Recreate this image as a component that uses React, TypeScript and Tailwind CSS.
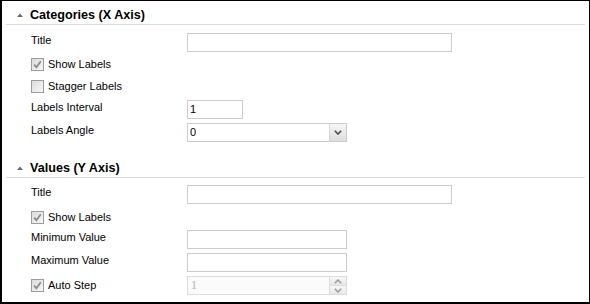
import React from "react";

const Check = ({ checked }: { checked: boolean }) => (
  <span className="w-[13px] h-[13px] border border-[#9c9c9c] bg-linear-to-br from-[#dcdcdc] to-[#f7f7f7] flex items-center justify-center shrink-0">
    {checked && (
      <svg width="9" height="9" viewBox="0 0 9 9">
        <path d="M1.2 4.6 L3.4 7.2 L7.8 1.2" stroke="#8c8c8c" strokeWidth="1.8" fill="none" />
      </svg>
    )}
  </span>
);

const Header = ({ title, className = "" }: { title: string; className?: string }) => (
  <div className={`h-[24px] mx-[4px] border-b border-[#dcdcdc] flex items-start pt-[6px] ${className}`}>
    <svg width="6" height="4" viewBox="0 0 6 4" className="ml-[11px] mt-[6px] shrink-0">
      <polygon points="0,4 3,0.5 6,4" fill="#6a6a6a" />
    </svg>
    <span className="ml-[7px] text-[12.6px] leading-[16px] font-bold text-black">{title}</span>
  </div>
);

const InputRow = ({
  label,
  h = "h-[23px]",
  children,
}: {
  label: string;
  h?: string;
  children: React.ReactNode;
}) => (
  <div className={`flex items-center pl-[29px] ${h}`}>
    <span className="w-[156px] pb-[4px] shrink-0">{label}</span>
    {children}
  </div>
);

const CheckRow = ({ label, checked, h = "h-[23px]" }: { label: string; checked: boolean; h?: string }) => (
  <div className={`flex items-center pl-[29px] ${h}`}>
    <Check checked={checked} />
    <span className="ml-[4px]">{label}</span>
  </div>
);

const TextBox = ({ w, value }: { w: string; value?: string }) => (
  <div className={`${w} h-[19px] border border-[#cccccc] bg-white flex items-center pl-[2px] text-[11px]`}>
    {value}
  </div>
);

export default function App() {
  return (
    <div
      className="w-[590px] h-[304px] bg-white border-black border-t border-r border-l-2 border-b-2 text-[11px] leading-[13px] text-black overflow-hidden"
      style={{ fontFamily: '"Liberation Sans", Arial, sans-serif' }}
    >
      <Header title="Categories (X Axis)" />
      <div className="pt-[6px]">
        <InputRow label="Title">
          <TextBox w="w-[265px]" />
        </InputRow>
        <CheckRow label="Show Labels" checked h="h-[21px]" />
        <CheckRow label="Stagger Labels" checked={false} />
        <InputRow label="Labels Interval">
          <TextBox w="w-[56px]" value="1" />
        </InputRow>
        <InputRow label="Labels Angle">
          <div className="w-[160px] h-[19px] border border-[#cccccc] bg-white flex items-stretch">
            <div className="flex-1 flex items-center pl-[2px]">0</div>
            <div className="w-[17px] border-l border-[#d4d4d4] bg-linear-to-b from-[#f6f6f6] to-[#dedede] flex items-center justify-center">
              <svg width="8" height="5" viewBox="0 0 8 5">
                <path d="M0.8 0.8 L4 4 L7.2 0.8" stroke="#4a4a4a" strokeWidth="1.6" fill="none" />
              </svg>
            </div>
          </div>
        </InputRow>
      </div>

      <Header title="Values (Y Axis)" className="mt-[10px]" />
      <div className="pt-[5px]">
        <InputRow label="Title">
          <TextBox w="w-[265px]" />
        </InputRow>
        <CheckRow label="Show Labels" checked h="h-[22px]" />
        <InputRow label="Minimum Value">
          <TextBox w="w-[160px]" />
        </InputRow>
        <InputRow label="Maximum Value">
          <TextBox w="w-[160px]" />
        </InputRow>
        <div className="flex items-center pl-[29px] h-[23px]">
          <div className="w-[156px] flex items-center">
            <Check checked />
            <span className="ml-[4px]">Auto Step</span>
          </div>
          <div className="w-[160px] h-[19px] border border-[#dcdcdc] bg-[#fbfbfb] flex items-stretch">
            <div
              className="flex-1 flex items-center pl-[3px] text-[12px] text-[#b4b4b4]"
              style={{ fontFamily: '"Liberation Serif", serif' }}
            >
              1
            </div>
            <div className="w-[17px] border-l border-[#dcdcdc] flex flex-col">
              <div className="flex-1 bg-linear-to-b from-[#f8f8f8] to-[#e6e6e6] flex items-center justify-center border-b border-[#dcdcdc]">
                <svg width="8" height="5" viewBox="0 0 8 5">
                  <path d="M0.8 4.2 L4 1 L7.2 4.2" stroke="#9a9a9a" strokeWidth="1.5" fill="none" />
                </svg>
              </div>
              <div className="flex-1 bg-linear-to-b from-[#f8f8f8] to-[#e6e6e6] flex items-center justify-center">
                <svg width="8" height="5" viewBox="0 0 8 5">
                  <path d="M0.8 0.8 L4 4 L7.2 0.8" stroke="#9a9a9a" strokeWidth="1.5" fill="none" />
                </svg>
              </div>
            </div>
          </div>
        </div>
      </div>
    </div>
  );
}
